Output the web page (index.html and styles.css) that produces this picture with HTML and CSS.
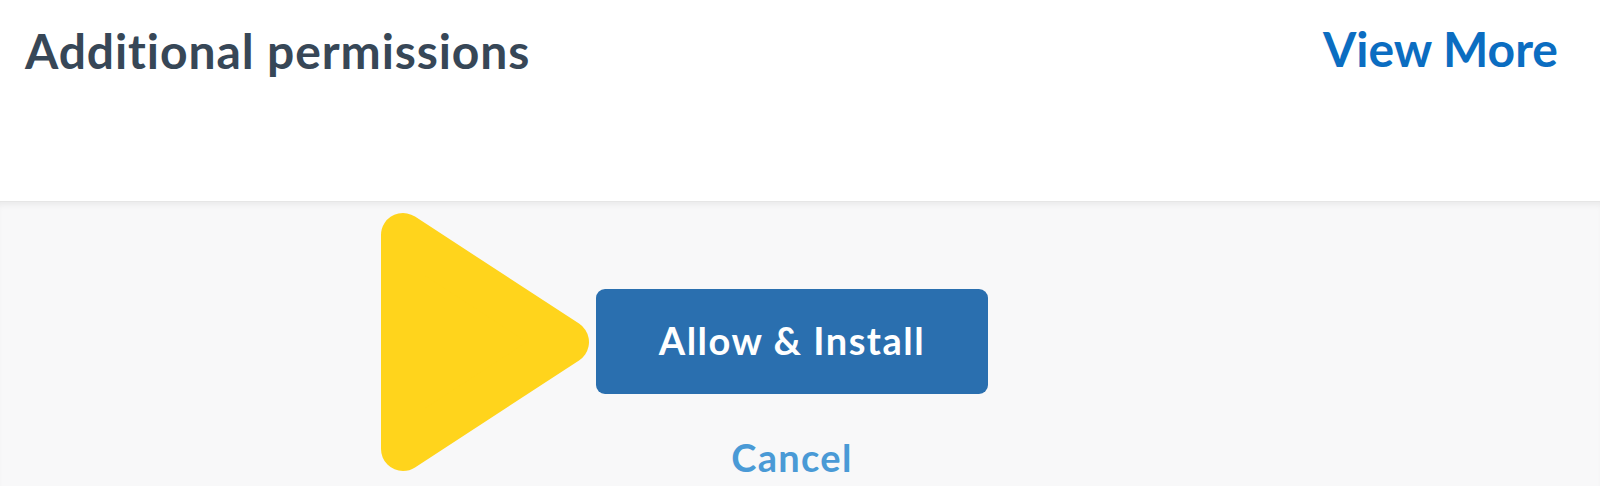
FILE: index.html
```html
<!DOCTYPE html>
<html lang="en">
<head>
<meta charset="utf-8">
<title>Additional permissions</title>
<link rel="stylesheet" href="styles.css">
</head>
<body>
<header class="perm-header">
  <h2 class="perm-title">Additional permissions</h2>
  <a class="view-more" href="#">View More</a>
</header>
<footer class="perm-actions">
  <svg class="pointer" width="230" height="280" viewBox="0 0 230 280" aria-hidden="true">
    <polygon points="32,32 32,246 196,139" fill="#ffd41c" stroke="#ffd41c" stroke-width="44" stroke-linejoin="round"/>
  </svg>
  <div class="action-col">
    <button class="btn-install" type="button">Allow &amp; Install</button>
    <a class="cancel" href="#">Cancel</a>
  </div>
</footer>
</body>
</html>
```
FILE: styles.css
```css
html, body {
  margin: 0;
  padding: 0;
}
body {
  width: 1600px;
  height: 486px;
  overflow: hidden;
  background: #f8f8f9;
  font-family: Lato, "Open Sans", "Liberation Sans", sans-serif;
  font-variant-ligatures: none;
}
.perm-header {
  height: 201px;
  box-sizing: border-box;
  background: #ffffff;
  display: flex;
  justify-content: space-between;
  align-items: flex-start;
  padding: 23px 42px 0 25px;
}
.perm-title {
  margin: 0;
  font-size: 48px;
  line-height: 56px;
  font-weight: 700;
  letter-spacing: 0.9px;
  color: #374757;
}
.view-more {
  font-size: 48px;
  line-height: 56px;
  font-weight: 700;
  color: #0b6dc1;
  text-decoration: none;
  margin-top: -2px;
}
.perm-actions {
  position: relative;
  height: 285px;
  box-sizing: border-box;
  border-top: 1px solid #e6e6e6;
  box-shadow: inset 0 6px 6px -3px rgba(0, 0, 0, 0.06);
  display: flex;
  justify-content: center;
  padding: 87px 16px 0 0;
}
.pointer {
  position: absolute;
  left: 371px;
  top: 1px;
}
.action-col {
  display: flex;
  flex-direction: column;
  align-items: center;
}
.btn-install {
  width: 392px;
  height: 105px;
  border: none;
  border-radius: 9px;
  background: #2a6faf;
  color: #ffffff;
  font-family: inherit;
  font-size: 38px;
  font-weight: 700;
  letter-spacing: 1.5px;
  padding: 0 0 4px;
}
.cancel {
  margin-top: 40px;
  font-size: 38px;
  line-height: 46px;
  font-weight: 700;
  letter-spacing: 1.3px;
  color: #4a9ad6;
  text-decoration: none;
}
```
